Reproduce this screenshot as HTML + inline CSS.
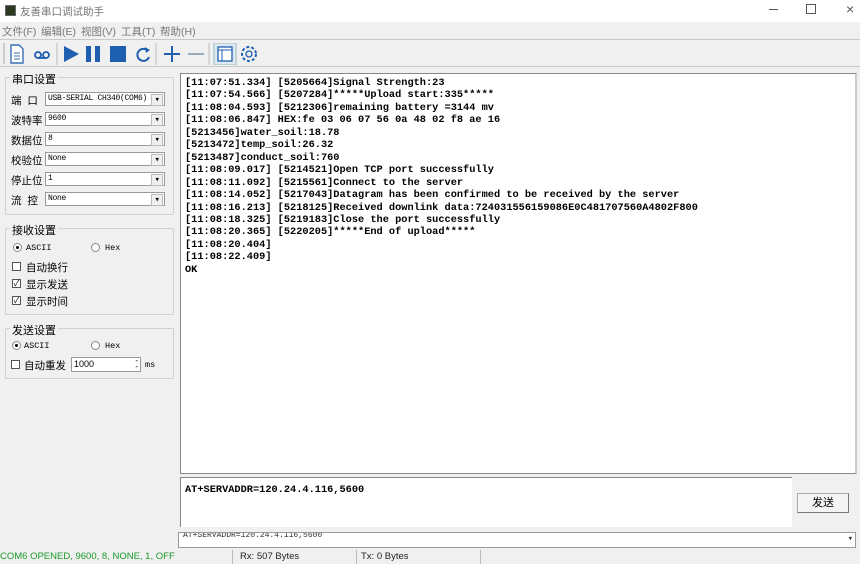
<!DOCTYPE html><html><head><meta charset="utf-8"><style>
*{box-sizing:border-box;margin:0;padding:0}
body{width:860px;height:564px;background:#f0f0f0;font-family:"Liberation Sans","Noto Sans CJK SC",sans-serif;font-size:11px;color:#000;position:relative;overflow:hidden}
.a{position:absolute}
.title{left:0;top:0;width:860px;height:22px;background:#fff}
.menu{top:22px;left:0;width:860px;height:18px;border-bottom:1px solid #c8c8c8;color:#777;font-size:10.5px}
.menu span{position:absolute;top:2px}
.tb{top:40px;left:0;width:860px;height:27px;border-bottom:1px solid #c8c8c8}
.grp{border:1px solid #d0d0d0;border-radius:2px}
.leg{background:#f0f0f0;padding:0 2px;font-size:11px}
.sel{height:14px;background:#fff;border:1px solid #999;font-family:"Liberation Mono",monospace;font-size:8px;letter-spacing:-0.3px;line-height:12px;padding-left:2px;white-space:nowrap}
.sel:after{content:"▾";position:absolute;right:1px;top:1px;width:10px;height:10px;font-size:9px;line-height:10px;text-align:center;background:#f0f0f0;border:1px solid #bbb}
.lbl{font-size:10.5px}
.mono{font-family:"Liberation Mono",monospace;font-size:8.5px}
.cb{width:9px;height:9px;border:1px solid #555;background:#fff;font-size:8px;line-height:7px;text-align:center}
.rd{width:9px;height:9px;border:1px solid #888;border-radius:50%;background:#fff}
.rx{left:180px;top:73px;width:677px;height:401px;background:#fff;border:1px solid #888;border-right:2px solid #ccc;padding:3px 0 0 4px;font-family:"Liberation Mono",monospace;font-weight:bold;font-size:10.3px;line-height:12.45px;white-space:pre}
</style></head><body>
<div class="a title">
<div class="a" style="left:5px;top:5px;width:11px;height:11px;background:#2d3a1f;border:1px solid #666"></div>
<div class="a" style="left:20px;top:4px;color:#777;font-size:10.5px">友善串口调试助手</div>
<div class="a" style="left:769px;top:9px;width:9px;height:1px;background:#555"></div>
<div class="a" style="left:806px;top:4px;width:10px;height:10px;border:1px solid #555"></div>
<div class="a" style="left:846px;top:1px;color:#555;font-size:14px">×</div>
</div>
<div class="a menu"><span style="left:2px">文件(F)</span><span style="left:41px">编辑(E)</span><span style="left:81px">视图(V)</span><span style="left:121px">工具(T)</span><span style="left:160px">帮助(H)</span></div>
<div class="a tb">
<div class="a" style="left:3px;top:3px;width:2px;height:21px;background:#ccc"></div>
<svg class="a" style="left:8px;top:3px" width="256" height="22" viewBox="0 0 256 22">
<path d="M3 2h8l4 4v14H3z" fill="#fff" stroke="#3a6fb5" stroke-width="1.4"/><path d="M6 10h6M6 13h6M6 16h6" stroke="#3a6fb5"/>
<circle cx="30" cy="12" r="3" fill="none" stroke="#1f5fb0" stroke-width="1.8"/><circle cx="38" cy="12" r="3" fill="none" stroke="#1f5fb0" stroke-width="1.8"/><path d="M30 15h8" stroke="#1f5fb0" stroke-width="1.8"/>
<path d="M49 0v22" stroke="#bbb"/>
<path d="M56 3l15 8-15 8z" fill="#1f5fb0"/>
<rect x="78" y="3" width="5" height="16" fill="#1f5fb0"/><rect x="87" y="3" width="5" height="16" fill="#1f5fb0"/>
<rect x="102" y="3" width="16" height="16" fill="#1f5fb0"/>
<path d="M140 8a6 6 0 1 0 1 6" fill="none" stroke="#1f5fb0" stroke-width="2"/><path d="M137 4l5 3-4 3z" fill="#1f5fb0"/>
<path d="M148 0v22" stroke="#bbb"/>
<path d="M156 11h16M164 3v16" stroke="#1f5fb0" stroke-width="2"/>
<path d="M180 11h16" stroke="#9ab" stroke-width="2"/>
<path d="M201 0v22" stroke="#bbb"/>
<rect x="206" y="0" width="22" height="22" fill="#dfe8f3" stroke="#9bb"/>
<rect x="210" y="4" width="14" height="14" fill="#fff" stroke="#1f5fb0" stroke-width="1.3"/><path d="M210 7h14M214 7v11" stroke="#1f5fb0"/>
<circle cx="241" cy="11" r="7" fill="none" stroke="#1f5fb0" stroke-width="2" stroke-dasharray="3 2"/><circle cx="241" cy="11" r="3" fill="none" stroke="#1f5fb0" stroke-width="1.3"/>
</svg>
</div>

<div class="a grp" style="left:5px;top:77px;width:169px;height:138px"></div>
<div class="a leg" style="left:10px;top:71px">串口设置</div>
<div class="a lbl" style="left:11px;top:93px">端 &nbsp;口</div><div class="a sel" style="left:45px;top:92px;width:120px">USB-SERIAL CH340(COM6)</div>
<div class="a lbl" style="left:11px;top:113px">波特率</div><div class="a sel" style="left:45px;top:112px;width:120px">9600</div>
<div class="a lbl" style="left:11px;top:133px">数据位</div><div class="a sel" style="left:45px;top:132px;width:120px">8</div>
<div class="a lbl" style="left:11px;top:153px">校验位</div><div class="a sel" style="left:45px;top:152px;width:120px">None</div>
<div class="a lbl" style="left:11px;top:173px">停止位</div><div class="a sel" style="left:45px;top:172px;width:120px">1</div>
<div class="a lbl" style="left:11px;top:193px">流 &nbsp;控</div><div class="a sel" style="left:45px;top:192px;width:120px">None</div>

<div class="a grp" style="left:5px;top:228px;width:169px;height:87px"></div>
<div class="a leg" style="left:10px;top:222px">接收设置</div>
<div class="a rd" style="left:13px;top:243px"></div><div class="a" style="left:16px;top:246px;width:3px;height:3px;background:#000;border-radius:50%"></div><div class="a mono" style="left:26px;top:243px">ASCII</div>
<div class="a rd" style="left:91px;top:243px"></div><div class="a mono" style="left:105px;top:243px">Hex</div>
<div class="a cb" style="left:12px;top:262px"></div><div class="a lbl" style="left:26px;top:260px">自动换行</div>
<div class="a cb" style="left:12px;top:279px">✓</div><div class="a lbl" style="left:26px;top:277px">显示发送</div>
<div class="a cb" style="left:12px;top:296px">✓</div><div class="a lbl" style="left:26px;top:294px">显示时间</div>

<div class="a grp" style="left:5px;top:328px;width:169px;height:51px"></div>
<div class="a leg" style="left:10px;top:322px">发送设置</div>
<div class="a rd" style="left:12px;top:341px"></div><div class="a" style="left:15px;top:344px;width:3px;height:3px;background:#000;border-radius:50%"></div><div class="a mono" style="left:24px;top:341px">ASCII</div>
<div class="a rd" style="left:91px;top:341px"></div><div class="a mono" style="left:105px;top:341px">Hex</div>
<div class="a cb" style="left:11px;top:360px"></div><div class="a lbl" style="left:24px;top:358px">自动重发</div>
<div class="a" style="left:71px;top:357px;width:70px;height:15px;background:#fff;border:1px solid #999;font-size:9px;padding:1px 2px">1000<span class="a" style="right:2px;top:0;font-size:8px;line-height:6px">-<br>-</span></div>
<div class="a mono" style="left:145px;top:360px">ms</div>

<div class="a rx">[11:07:51.334] [5205664]Signal Strength:23
[11:07:54.566] [5207284]*****Upload start:335*****
[11:08:04.593] [5212306]remaining battery =3144 mv
[11:08:06.847] HEX:fe 03 06 07 56 0a 48 02 f8 ae 16
[5213456]water_soil:18.78
[5213472]temp_soil:26.32
[5213487]conduct_soil:760
[11:08:09.017] [5214521]Open TCP port successfully
[11:08:11.092] [5215561]Connect to the server
[11:08:14.052] [5217043]Datagram has been confirmed to be received by the server
[11:08:16.213] [5218125]Received downlink data:724031556159086E0C481707560A4802F800
[11:08:18.325] [5219183]Close the port successfully
[11:08:20.365] [5220205]*****End of upload*****
[11:08:20.404]
[11:08:22.409]
OK</div>
<div class="a" style="left:180px;top:477px;width:612px;height:50px;background:#fff;border:1px solid #888;border-right:none;border-bottom:none;padding:6px 0 0 4px;font-family:'Liberation Mono',monospace;font-weight:bold;font-size:10.3px">AT+SERVADDR=120.24.4.116,5600</div>
<div class="a" style="left:797px;top:493px;width:52px;height:20px;background:#f4f4f4;border:1px solid #aaa;border-right-color:#777;border-bottom-color:#777;text-align:center;line-height:18px;font-size:11px">发送</div>
<div class="a" style="left:178px;top:532px;width:678px;height:16px;background:#fff;border:1px solid #999;font-family:'Liberation Mono',monospace;font-size:8px;line-height:6px;padding-left:4px;color:#333;overflow:hidden">AT+SERVADDR=120.24.4.116,5600<span class="a" style="right:2px;top:3px;font-size:9px">▾</span></div>
<div class="a" style="left:0;top:550px;width:860px;height:14px;font-size:9.5px;line-height:14px">
<div class="a" style="left:0;top:0;color:#1a9a2a">COM6 OPENED, 9600, 8, NONE, 1, OFF</div>
<div class="a" style="left:232px;top:0;width:120px;height:14px;border-left:1px solid #bbb;padding-left:7px;color:#222">Rx: 507 Bytes</div>
<div class="a" style="left:356px;top:0;width:120px;height:14px;border-left:1px solid #bbb;padding-left:4px;color:#222">Tx: 0 Bytes</div>
<div class="a" style="left:480px;top:0;width:376px;height:14px;border-left:1px solid #bbb"></div>
</div>
</body></html>
